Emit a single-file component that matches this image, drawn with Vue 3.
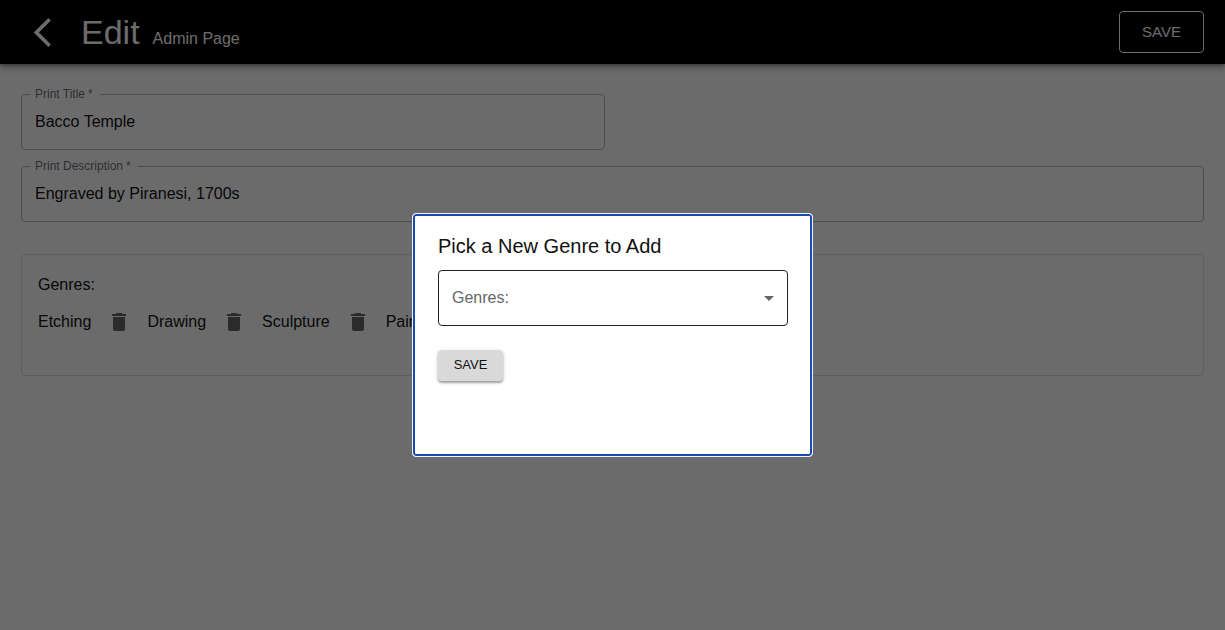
<script setup>
import { ref } from 'vue'

const title = ref('Bacco Temple')
const description = ref('Engraved by Piranesi, 1700s')
const genres = ref(['Etching', 'Drawing', 'Sculpture', 'Painting'])
const picked = ref('')

function removeGenre(name) {
  genres.value = genres.value.filter((g) => g !== name)
}

function addGenre() {
  if (picked.value && !genres.value.includes(picked.value)) {
    genres.value.push(picked.value)
  }
}
</script>

<template>
  <div class="page">
    <header class="bar">
      <button class="back" type="button" aria-label="Back">
        <svg viewBox="0 0 24 24" aria-hidden="true"><path d="M17.77 3.77 16 2 6 12l10 10 1.77-1.77L9.54 12z" /></svg>
      </button>
      <div class="heading">
        <h1>Edit</h1>
        <span>Admin Page</span>
      </div>
      <button class="save-outlined" type="button">SAVE</button>
    </header>

    <main class="content">
      <div class="field half">
        <label for="title">Print Title<span class="star">*</span></label>
        <input id="title" v-model="title" type="text" required />
      </div>
      <div class="field">
        <label for="description">Print Description<span class="star">*</span></label>
        <input id="description" v-model="description" type="text" required />
      </div>

      <section class="card">
        <h2>Genres:</h2>
        <ul>
          <li v-for="genre in genres" :key="genre">
            <span>{{ genre }}</span>
            <button type="button" :aria-label="'Delete ' + genre" @click="removeGenre(genre)">
              <svg viewBox="0 0 24 24" aria-hidden="true"><path d="M6 19c0 1.1.9 2 2 2h8c1.1 0 2-.9 2-2V7H6v12zM19 4h-3.5l-1-1h-5l-1 1H5v2h14V4z" /></svg>
            </button>
          </li>
        </ul>
      </section>
    </main>

    <div class="backdrop">
      <div class="dialog" role="dialog" aria-modal="true" aria-labelledby="dialog-title">
        <h2 id="dialog-title">Pick a New Genre to Add</h2>
        <div class="picker">
          <select v-model="picked" aria-label="Genres">
            <option value="" disabled>Genres:</option>
            <option v-for="genre in genres" :key="genre" :value="genre">{{ genre }}</option>
          </select>
          <svg viewBox="0 0 24 24" aria-hidden="true"><path d="m7 10 5 5 5-5z" /></svg>
        </div>
        <button class="save-small" type="button" @click="addGenre">SAVE</button>
      </div>
    </div>
  </div>
</template>

<style>
body {
  margin: 0;
  background: #fff;
}
</style>

<style scoped>
.page,
.page * {
  box-sizing: border-box;
}

.page {
  min-height: 100vh;
  color: #111;
  font-family: "Liberation Sans", Helvetica, Arial, sans-serif;
  font-size: 16px;
  line-height: 24px;
}

button,
input,
select {
  margin: 0;
  font-family: inherit;
  color: inherit;
}

h1,
h2,
ul {
  margin: 0;
  padding: 0;
  font-weight: 400;
}

.bar {
  display: flex;
  align-items: center;
  height: 64px;
  padding: 0 21px 0 25px;
  background: #000;
  color: #fff;
  box-shadow: 0 2px 4px rgba(0, 0, 0, 0.35), 0 4px 8px rgba(0, 0, 0, 0.2);
}

.back {
  display: flex;
  padding: 0;
  border: 0;
  background: none;
}

.back svg {
  width: 35px;
  height: 35px;
  fill: currentColor;
}

.heading {
  display: flex;
  align-items: baseline;
  gap: 13px;
  margin-left: 21px;
}

.heading h1 {
  font-size: 34px;
  line-height: 42px;
}

.save-outlined {
  margin-left: auto;
  height: 42px;
  padding: 0 22px 2px;
  border: 1px solid #fff;
  border-radius: 4px;
  background: none;
  font-size: 15px;
}

.content {
  padding: 30px 21px;
}

.field {
  position: relative;
  margin-bottom: 16px;
}

.field.half {
  width: calc(50% - 8px);
}

.field label {
  position: absolute;
  top: -8px;
  left: 9px;
  padding: 0 7px 0 5px;
  background: #fff;
  color: rgba(0, 0, 0, 0.6);
  font-size: 12px;
  line-height: 16px;
}

.star {
  padding-left: 3px;
}

.field input {
  display: block;
  width: 100%;
  height: 56px;
  padding: 0 13px;
  border: 1px solid #bbb;
  border-radius: 4px;
  background: none;
  font-size: 16px;
}

.card {
  margin-top: 32px;
  padding: 18px 16px 41px;
  border: 1px solid #e0e0e0;
  border-radius: 4px;
}

.card h2 {
  font-size: 16px;
}

.card ul {
  display: flex;
  gap: 16px;
  margin-top: 13px;
  list-style: none;
}

.card li {
  display: flex;
  align-items: center;
  gap: 16px;
}

.card li button {
  display: flex;
  padding: 0;
  border: 0;
  background: none;
  color: rgba(0, 0, 0, 0.6);
}

.card li svg {
  width: 24px;
  height: 24px;
  fill: currentColor;
}

.backdrop {
  position: fixed;
  inset: 0;
  display: flex;
  align-items: center;
  justify-content: center;
  padding-top: 40px;
  background: rgba(0, 0, 0, 0.58);
}

.dialog {
  width: 401px;
  padding: 16px 24px 75px 25px;
  border: 1px solid #eef4ff;
  border-radius: 4px;
  background: #fff;
  box-shadow: inset 0 0 0 2px #1c4bb0;
}

.dialog h2 {
  font-size: 20px;
  line-height: 32px;
}

.picker {
  position: relative;
  margin: 8px 0 24px;
}

.picker select {
  display: block;
  width: 100%;
  height: 56px;
  padding: 0 32px 2px 13px;
  border: 1px solid #222;
  border-radius: 4px;
  appearance: none;
  background: #fff;
  color: #666;
  font-size: 16px;
}

.picker svg {
  position: absolute;
  top: 16px;
  right: 7px;
  width: 24px;
  height: 24px;
  fill: #666;
  pointer-events: none;
}

.save-small {
  display: block;
  min-width: 65px;
  height: 31px;
  padding: 0 12px 2px;
  border: 0;
  border-radius: 4px;
  background: #d9d9d9;
  font-size: 13px;
  box-shadow: 0 2px 2px rgba(0, 0, 0, 0.3), 0 1px 5px rgba(0, 0, 0, 0.15);
}
</style>
